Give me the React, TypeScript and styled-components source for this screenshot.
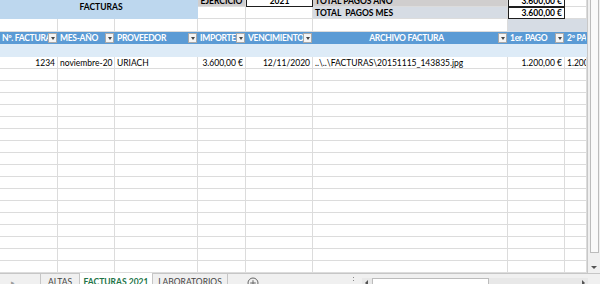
import React from 'react';
import styled, { createGlobalStyle, css } from 'styled-components';

const Global = createGlobalStyle`
  html, body { margin: 0; padding: 0; background: #fff; }
  body { width: 600px; height: 284px; overflow: hidden; font-family: Lato, "Open Sans", sans-serif; }
`;

const COLS = '58px 57px 83px 48px 67px 195px 57px 22px';
const GRID = '#dcdcdc';

const Window = styled.div`
  width: 600px;
  height: 284px;
  display: flex;
  flex-direction: column;
  overflow: hidden;
`;

const Body = styled.div`
  display: flex;
  height: 273px;
  flex-shrink: 0;
`;

const Viewport = styled.div`
  flex: 1;
  overflow: hidden;
`;

const Sheet = styled.div`
  display: grid;
  grid-template-columns: ${COLS};
  grid-template-rows: 12px 12px 13px 12px 13px repeat(18, 12px);
  margin-top: -5px;
  font-size: 8.5px;
  color: #000;
`;

type CellProps = {
  $bg?: string;
  $align?: 'left' | 'right' | 'center';
  $bold?: boolean;
  $box?: boolean;
  $plain?: boolean;
};

const Cell = styled.div<CellProps>`
  box-sizing: border-box;
  display: flex;
  align-items: center;
  justify-content: ${(p) => (p.$align === 'right' ? 'flex-end' : p.$align === 'center' ? 'center' : 'flex-start')};
  padding: 0 2px;
  white-space: nowrap;
  overflow: hidden;
  background: ${(p) => p.$bg || '#fff'};
  font-weight: ${(p) => (p.$bold ? 700 : 400)};
  line-height: 12px;
  ${(p) =>
    p.$box
      ? css`
          border: 1.5px solid #1e1e1e;
        `
      : p.$plain
      ? ''
      : css`
          border-right: 1px solid ${GRID};
          border-bottom: 1px solid ${GRID};
        `}
`;

const TitleCell = styled.div`
  grid-column: 1 / 4;
  grid-row: 1 / 3;
  background: #bdd7ee;
  display: flex;
  align-items: center;
  justify-content: center;
  font-weight: 700;
  padding-left: 4px;
`;

const HeadCell = styled.div`
  box-sizing: border-box;
  background: #5b9bd5;
  color: #fff;
  font-weight: 700;
  display: flex;
  align-items: center;
  padding: 0 1px 0 2px;
  overflow: hidden;
`;

const HeadLabel = styled.span<{ $center?: boolean }>`
  flex: 1;
  min-width: 0;
  overflow: hidden;
  white-space: nowrap;
  letter-spacing: -0.3px;
  text-align: ${(p) => (p.$center ? 'center' : 'left')};
`;

const Drop = styled.span`
  flex-shrink: 0;
  box-sizing: border-box;
  width: 9px;
  height: 10px;
  background: #f4f4f4;
  border: 1px solid #a9a9a9;
  display: flex;
  align-items: center;
  justify-content: center;
  &::after {
    content: '';
    border-left: 2.5px solid transparent;
    border-right: 2.5px solid transparent;
    border-top: 3px solid #444;
  }
`;

const BandCell = styled.div`
  background: #ddebf7;
`;

const VScroll = styled.div`
  width: 13px;
  box-sizing: border-box;
  background: #f0f0f0;
  border-left: 1px solid #c8c8c8;
  display: flex;
  flex-direction: column;
  align-items: center;
  padding: 0 1px;
`;

const VThumb = styled.div`
  width: 9px;
  height: 253px;
  box-sizing: border-box;
  background: #fafafa;
  border: 1px solid #bcbcbc;
  border-top: none;
`;

const ArrowBtn = styled.div<{ $dir: 'down' | 'left' | 'right' }>`
  width: 9px;
  height: 9px;
  display: flex;
  align-items: center;
  justify-content: center;
  flex-shrink: 0;
  &::after {
    content: '';
    ${(p) =>
      p.$dir === 'down'
        ? css`
            border-left: 3px solid transparent;
            border-right: 3px solid transparent;
            border-top: 3px solid #555;
          `
        : p.$dir === 'left'
        ? css`
            border-top: 3px solid transparent;
            border-bottom: 3px solid transparent;
            border-right: 3px solid #555;
          `
        : css`
            border-top: 3px solid transparent;
            border-bottom: 3px solid transparent;
            border-left: 3px solid #555;
          `}
  }
`;

const DownArrow = styled(ArrowBtn)`
  margin-top: 10px;
`;

const TabBar = styled.div`
  flex: 1;
  display: flex;
  align-items: stretch;
  background: #f0f0f0;
  border-top: 1px solid #c6c6c6;
  box-sizing: border-box;
  font-size: 8.5px;
  color: #444;
`;

const Nav = styled.div`
  width: 40px;
  box-sizing: border-box;
  padding-left: 11px;
  padding-top: 4px;
  color: #9a9a9a;
  font-size: 7px;
`;

const Tab = styled.div<{ $active?: boolean; $w: number }>`
  box-sizing: border-box;
  width: ${(p) => p.$w}px;
  flex-shrink: 0;
  padding-top: 3px;
  border-left: 1px solid #c6c6c6;
  white-space: nowrap;
  text-align: center;
  ${(p) =>
    p.$active &&
    css`
      background: #fff;
      color: #217346;
      font-weight: 700;
      margin-top: -1px;
      padding-top: 4px;
      border-right: 1px solid #c6c6c6;
    `}
`;

const LastTab = styled(Tab)`
  border-left: none;
  border-right: 1px solid #c6c6c6;
`;

const AddBtn = styled.div`
  margin-left: 19px;
  padding-top: 3px;
  display: flex;
`;

const Splitter = styled.div`
  margin-left: auto;
  width: 10px;
  padding-top: 3px;
  display: flex;
  flex-direction: column;
  align-items: center;
  gap: 2px;
  &::before,
  &::after {
    content: '';
    width: 1px;
    height: 1px;
    background: #888;
  }
`;

const HScroll = styled.div`
  width: 226px;
  margin-left: 4px;
  margin-top: 4px;
  box-sizing: border-box;
  display: flex;
  align-items: flex-start;
  background: #e8e8e8;
`;

const HThumb = styled.div`
  width: 117px;
  height: 12px;
  box-sizing: border-box;
  background: #fff;
  border: 1px solid #bcbcbc;
  margin-left: 1px;
`;

const HSpacer = styled.div`
  flex: 1;
`;

const Corner = styled.div`
  width: 12px;
`;

const headers: { label: string; center?: boolean }[] = [
  { label: 'Nº. FACTURA' },
  { label: 'MES-AÑO' },
  { label: 'PROVEEDOR' },
  { label: 'IMPORTE' },
  { label: 'VENCIMIENTO' },
  { label: 'ARCHIVO FACTURA', center: true },
  { label: '1er. PAGO' },
  { label: '2º PAGO' },
];

const dataRow: { v: string; align?: 'left' | 'right' }[] = [
  { v: '1234', align: 'right' },
  { v: 'noviembre-20' },
  { v: 'URIACH' },
  { v: '3.600,00 €', align: 'right' },
  { v: '12/11/2020', align: 'right' },
  { v: '..\\..\\FACTURAS\\20151115_143835.jpg' },
  { v: '1.200,00 €', align: 'right' },
  { v: '1.200,00 €' },
];

export default function App() {
  const empty = Array.from({ length: 17 });
  return (
    <Window>
      <Global />
      <Body>
        <Viewport>
          <Sheet>
            <TitleCell>FACTURAS</TitleCell>
            {/* row 0 */}
            <Cell $bg="#d0cece" $bold $align="center">EJERCICIO</Cell>
            <Cell $box $bold $align="center">2021</Cell>
            <Cell $bg="#d0cece" $bold>TOTAL PAGOS AÑO</Cell>
            <Cell $box $bold $align="right">3.600,00 €</Cell>
            <Cell />
            {/* row 1 */}
            <Cell />
            <Cell />
            <Cell $bg="#d6dce4" $bold>TOTAL&nbsp; PAGOS MES</Cell>
            <Cell $box $bold $align="right">3.600,00 €</Cell>
            <Cell />
            {/* row 2 */}
            {[0, 1, 2, 3, 4, 5].map((i) => (
              <Cell key={'r2' + i} />
            ))}
            <Cell $bg="#d6dce4" $plain />
            <Cell $bg="#d6dce4" $plain />
            {/* header */}
            {headers.map((h) => (
              <HeadCell key={h.label}>
                <HeadLabel $center={h.center}>{h.label}</HeadLabel>
                {h.label !== '2º PAGO' && <Drop />}
              </HeadCell>
            ))}
            {/* band */}
            {headers.map((h) => (
              <BandCell key={'b' + h.label} />
            ))}
            {/* data */}
            {dataRow.map((d, i) => (
              <Cell key={'d' + i} $align={d.align}>
                {d.v}
              </Cell>
            ))}
            {empty.map((_, r) =>
              headers.map((h) => <Cell key={r + h.label} />)
            )}
          </Sheet>
        </Viewport>
        <VScroll>
          <VThumb />
          <DownArrow $dir="down" />
        </VScroll>
      </Body>
      <TabBar>
        <Nav>▸</Nav>
        <Tab $w={39}>ALTAS</Tab>
        <Tab $w={74} $active>FACTURAS 2021</Tab>
        <LastTab $w={75}>LABORATORIOS</LastTab>
        <AddBtn>
          <svg width="12" height="12" viewBox="0 0 12 12">
            <circle cx="6" cy="6" r="5" fill="none" stroke="#666" strokeWidth="1" />
            <path d="M6 3.2v5.6M3.2 6h5.6" stroke="#666" strokeWidth="1" />
          </svg>
        </AddBtn>
        <Splitter />
        <HScroll>
          <ArrowBtn $dir="left" />
          <HThumb />
          <HSpacer />
          <ArrowBtn $dir="right" />
        </HScroll>
        <Corner />
      </TabBar>
    </Window>
  );
}
